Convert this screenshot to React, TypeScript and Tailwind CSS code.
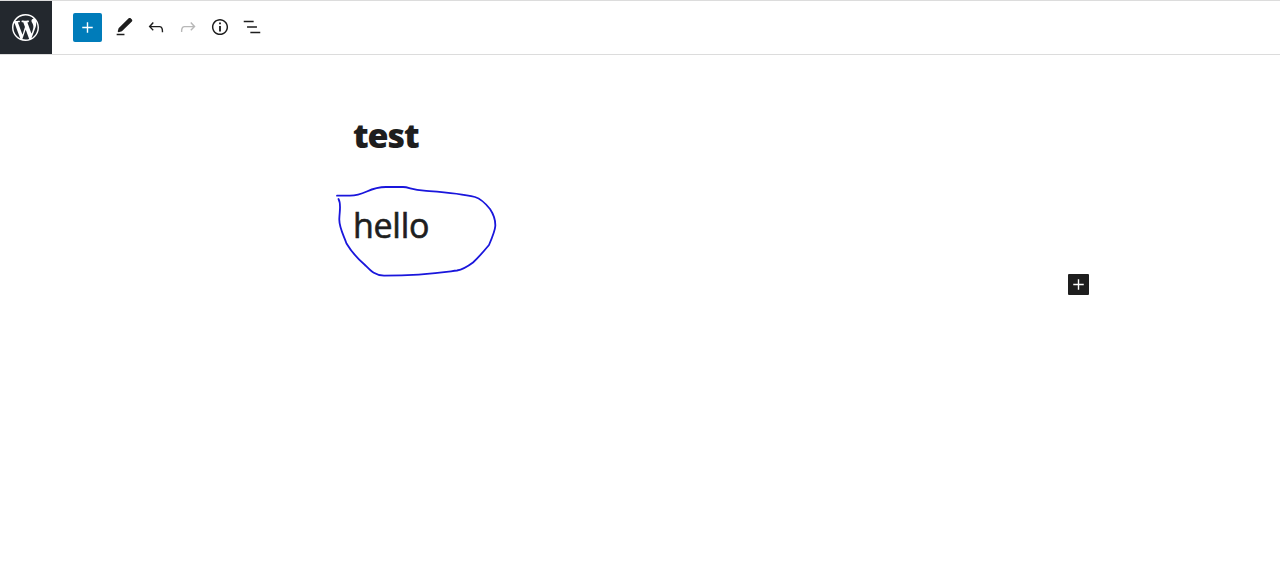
const PLUS = 'M18 11.2h-5.2V6h-1.6v5.2H6v1.6h5.2V18h1.6v-5.2H18z'

const tools = [
  {
    label: 'Tools',
    className: 'text-[#1e1e1e]',
    path: 'M17.1 2.5c.6-.6 1.6-.6 2.2 0l1.3 1.3c.6.6.6 1.6 0 2.2L9.7 16.7l-3.7 1-.9-.9 1-3.5L17.1 2.5zM4 19.3h8.5v1.6H4z',
  },
  {
    label: 'Undo',
    className: 'text-[#1e1e1e]',
    path: 'M18.3 11.7c-.6-.6-1.4-.9-2.3-.9H6.7l2.9-3.3-1.1-1-4.5 5L8.5 16l1-1-2.7-2.7H16c.5 0 .9.2 1.3.5 1 1 1 3.4 1 4.5v.3h1.5v-.2c0-1.5 0-4.3-1.5-5.7z',
  },
  {
    label: 'Redo',
    className: 'text-[#b8b8b8]',
    path: 'M15.6 6.5l-1.1 1 2.9 3.3H8c-.9 0-1.7.3-2.3.9-1.4 1.5-1.4 4.2-1.4 5.6v.2h1.5v-.3c0-1.1 0-3.5 1-4.5.3-.3.7-.5 1.3-.5h9.2L14.5 15l1.1 1.1 4.6-4.6-4.6-5z',
  },
  {
    label: 'Details',
    className: 'text-[#1e1e1e]',
    path: 'M12 3.2c-4.8 0-8.8 3.9-8.8 8.8 0 4.8 3.9 8.8 8.8 8.8 4.8 0 8.8-3.9 8.8-8.8 0-4.8-4-8.8-8.8-8.8zm0 16c-4 0-7.2-3.3-7.2-7.2C4.8 8 8 4.8 12 4.8s7.2 3.3 7.2 7.2c0 4-3.2 7.2-7.2 7.2zM11 17h2v-6h-2v6zm0-8h2V7h-2v2z',
  },
  {
    label: 'List view',
    className: 'text-[#1e1e1e]',
    path: 'M13.8 5.2H3v1.5h10.8V5.2zm-3.6 12v1.5H21v-1.5H10.2zm7.2-6H6.6v1.5h10.8v-1.5z',
  },
]

const Icon = ({ path, className }: { path: string; className: string }) => (
  <svg viewBox="0 0 24 24" fill="currentColor" className={className}>
    <path d={path} />
  </svg>
)

const WordPressLogo = () => (
  <svg viewBox="0 0 20 20" fill="currentColor" className="size-[27px]">
    <path d="M20 10c0-5.51-4.49-10-10-10C4.48 0 0 4.49 0 10c0 5.52 4.48 10 10 10 5.51 0 10-4.48 10-10zM7.78 15.37L4.37 6.22c.55-.02 1.17-.08 1.17-.08.5-.06.44-1.13-.06-1.11 0 0-1.45.11-2.37.11-.18 0-.37 0-.58-.01C4.12 2.69 6.87 1.11 10 1.11c2.33 0 4.45.87 6.05 2.34-.68-.11-1.65.39-1.65 1.58 0 .74.45 1.36.9 2.1.35.61.55 1.36.55 2.46 0 1.49-1.4 5-1.4 5l-3.03-8.37c.54-.02.82-.17.82-.17.5-.05.44-1.25-.06-1.22 0 0-1.44.12-2.38.12-.87 0-2.33-.12-2.33-.12-.5-.03-.56 1.2-.06 1.22l.92.08 1.26 3.41zM17.41 10c.24-.64.74-1.87.43-4.25.7 1.29 1.05 2.71 1.05 4.25 0 3.29-1.73 6.24-4.4 7.78.97-2.59 1.94-5.2 2.92-7.78zM6.1 18.09C3.12 16.65 1.11 13.53 1.11 10c0-1.3.23-2.48.72-3.59C3.25 10.3 4.67 14.2 6.1 18.09zm4.03-6.63l2.58 6.98c-.86.29-1.76.45-2.71.45-.79 0-1.57-.11-2.29-.33.81-2.38 1.62-4.74 2.42-7.1z" />
  </svg>
)

const App = () => {
  return (
    <div className="flex h-screen flex-col overflow-hidden bg-white font-['Open_Sans','Noto_Sans',sans-serif] text-[#1e1e1e]">
      {/* Toolbar */}
      <header className="flex h-[55px] shrink-0 items-center border-y border-[#dcdcdc]">
        <a className="flex h-[53px] w-[52px] items-center justify-center bg-[#23282e] pr-px text-white" aria-label="View posts">
          <WordPressLogo />
        </a>
        <button className="ml-[21px] flex size-[29px] items-center justify-center rounded-xs bg-[#007cba] text-white" aria-label="Add block">
          <Icon path={PLUS} className="size-[21px]" />
        </button>
        <div className="ml-[6.4px] flex pb-px">
          {tools.map((tool) => (
            <button key={tool.label} aria-label={tool.label} className="flex size-8 items-center justify-center">
              <Icon path={tool.path} className={`size-[22px] ${tool.className}`} />
            </button>
          ))}
        </div>
      </header>

      {/* Post content */}
      <main className="ml-[353px] w-[736px] pt-14">
        <h1 className="text-[34px] leading-[48px] font-extrabold tracking-[-1.1px]">test</h1>
        <div className="relative mt-[42px] h-[48px]">
          <p className="text-[34px] leading-[48px] tracking-[-0.3px] [-webkit-text-stroke:0.6px_#1e1e1e]">hello</p>
          {/* Pen mark around the paragraph */}
          <svg
            viewBox="330 180 172 102"
            fill="none"
            stroke="#1a16dc"
            strokeWidth="1.8"
            strokeLinecap="round"
            strokeLinejoin="round"
            className="absolute top-[-21px] left-[-23px] h-[102px] w-[172px]"
          >
            <path d="M337 195.700H350C366 195.700 368 187 386 187H403C409 187 412 190 424 190.700C441 192 459 193 475 197C480 198.500 486 204 490 209C494 215 495.500 221 495.300 226C495 231 492 238 489 245C484 251 479 257 473 262.500C467 267 463 269.500 457 270.500C441 272.500 425 275.300 384 275.700C375 275.500 371 271 365 265C358 259 351 251 346.500 243.500C343 234 339 227 339.300 219C339.500 211 341.500 204 338.500 199" />
          </svg>
        </div>
        <div className="mt-[25px] flex justify-end">
          <button className="flex size-[21px] items-center justify-center rounded-[1px] bg-[#1e1e1e] text-white" aria-label="Add block">
            <Icon path={PLUS} className="size-[21px]" />
          </button>
        </div>
      </main>
    </div>
  )
}

export default App
